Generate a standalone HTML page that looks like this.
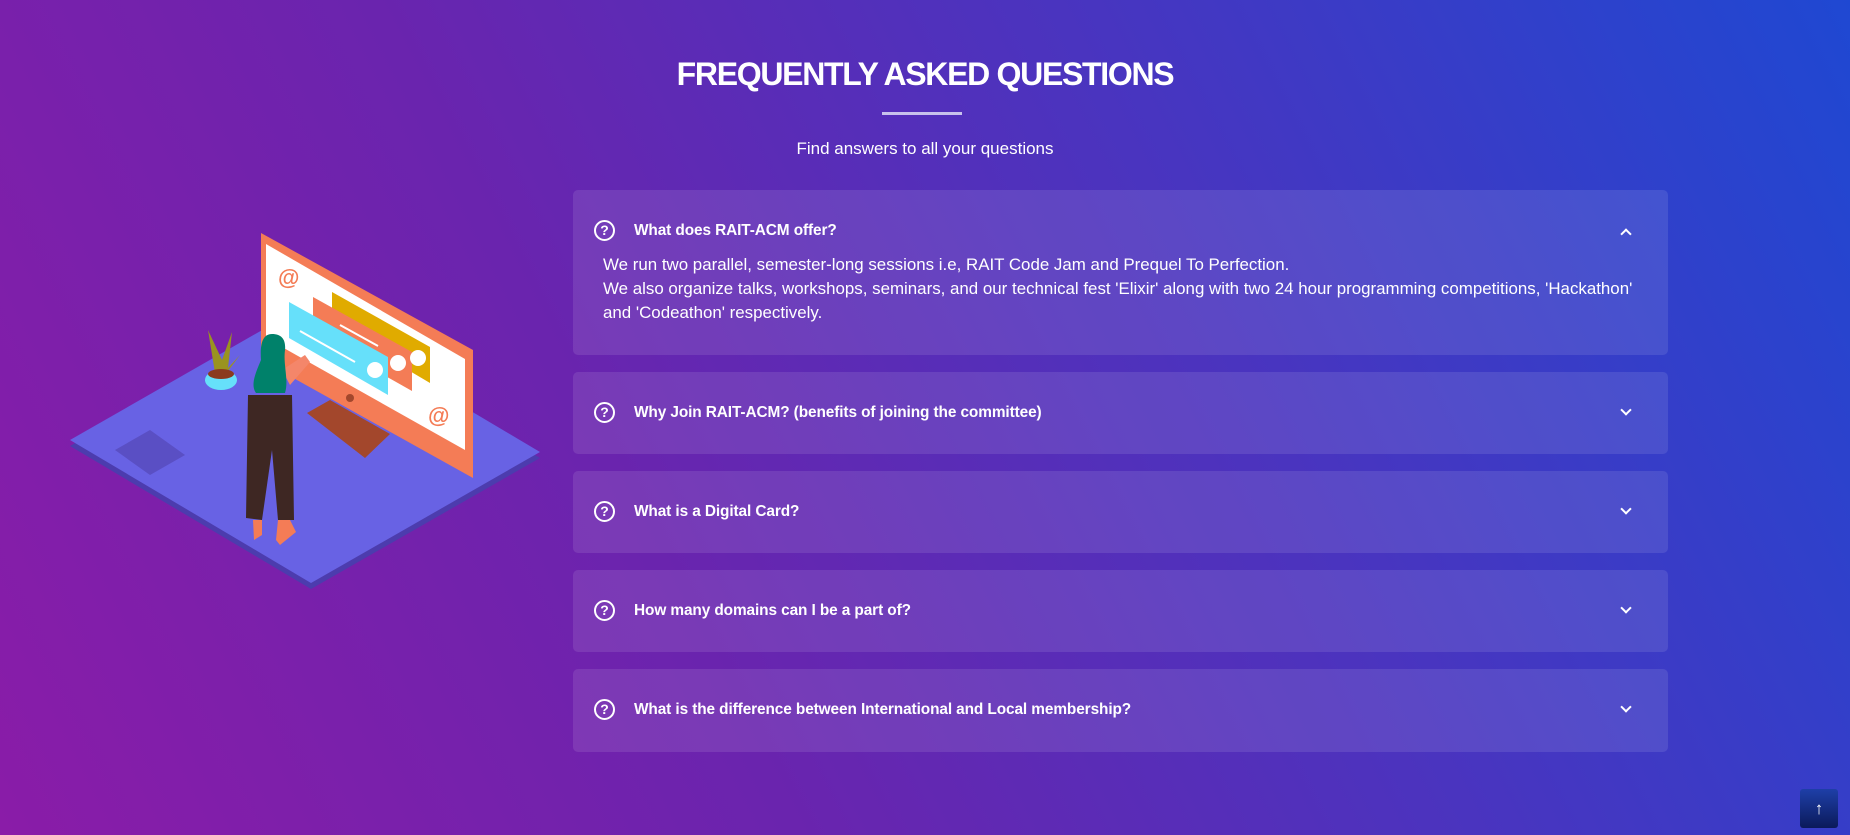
<!DOCTYPE html>
<html><head><meta charset="utf-8"><style>
*{margin:0;padding:0;box-sizing:border-box}
body{width:1850px;height:835px;overflow:hidden;font-family:"Liberation Sans",sans-serif;color:#fff;
background:linear-gradient(63deg,#8a1ca8 0%,#6a24ae 35%,#4a34bf 65%,#1f48d2 100%);position:relative}
h1{position:absolute;top:56px;left:0;width:1850px;text-align:center;font-size:32px;font-weight:800;letter-spacing:-1.3px}
.bar{position:absolute;left:882px;top:112px;width:80px;height:3px;background:#c8c2ec}
.sub{position:absolute;top:139px;width:1850px;text-align:center;font-size:17px}
.card{position:absolute;left:573px;width:1095px;background:rgba(255,255,255,0.1);border-radius:5px}
.q{position:absolute;left:61px;font-size:15.4px;font-weight:bold;letter-spacing:-0.1px}
.ic{position:absolute;left:21px;width:21px;height:21px;border:2px solid #fff;border-radius:50%;font-size:14px;font-weight:bold;text-align:center;line-height:17px}
.chev{position:absolute;left:1049px;width:8px;height:8px;border-right:2px solid #fff;border-bottom:2px solid #fff}
.ans{position:absolute;left:30px;top:63px;font-size:16.9px;line-height:24px}
.top{position:absolute;left:1800px;top:789px;width:38px;height:39px;border-radius:3px;background:linear-gradient(#1e3fa8,#0b1a5a);font-size:17px;text-align:center;line-height:39px;font-weight:bold}
</style></head><body>
<svg width="600" height="620" style="position:absolute;left:0;top:0" viewBox="0 0 600 620">
<polygon points="70,446 299,315 540,458 311,589" fill="#4c3cae"/>
<polygon points="70,440 299,309 540,452 311,583" fill="#6862e4"/>
<polygon points="115,450 150,430 185,455 150,475" fill="#5a4fc4"/>
<polygon points="307,413 330,400 390,434 365,458" fill="#a3472c"/>
<polygon points="261,233 473,350 473,478 261,360" fill="#f47c56"/>
<polygon points="266,244 465,359 465,450 266,338" fill="#fff"/>
<polygon points="332,292 430,347 430,383 332,325" fill="#e0ab00"/>
<polygon points="313,297 412,352 412,391 313,335" fill="#f47c56"/>
<polygon points="289,302 388,357 388,395 289,338" fill="#66e0fa"/>
<circle cx="418" cy="358" r="8" fill="#fff"/><circle cx="398" cy="363" r="8" fill="#fff"/><circle cx="375" cy="370" r="8" fill="#fff"/>
<line x1="300" y1="331" x2="355" y2="362" stroke="#fff" stroke-width="2"/>
<line x1="340" y1="325" x2="378" y2="346" stroke="#fff" stroke-width="2"/>
<text x="278" y="285" font-size="22" fill="#f47c56" font-weight="bold">@</text>
<text x="428" y="423" font-size="22" fill="#f47c56" font-weight="bold">@</text>
<ellipse cx="350" cy="398" rx="4" ry="4" fill="#a3472c"/>
<path d="M215,373 L208,330 L222,360 L232,332 L228,368 L240,355 L225,375Z" fill="#9a9320"/>
<ellipse cx="221" cy="380" rx="16" ry="10" fill="#66e0fa"/><ellipse cx="221" cy="374" rx="13" ry="5" fill="#8b3a1e"/>
<path d="M282,370 L305,355 L310,362 L290,385Z" fill="#f4866a"/>
<path d="M248,395 L292,395 L294,520 L278,520 L272,450 L262,520 L246,518Z" fill="#3e2723"/>
<path d="M254,540 L253,520 L262,520 L262,535Z M276,540 L278,520 L290,520 L296,532 L280,545Z" fill="#f47c56"/>
<path d="M272,334 C262,334 260,345 261,360 C256,372 250,385 256,393 L285,393 C289,380 283,365 285,350 C286,340 282,334 272,334Z" fill="#00816a"/>
</svg>
<h1>FREQUENTLY ASKED QUESTIONS</h1>
<div class="bar"></div>
<div class="sub">Find answers to all your questions</div>
<div class="card" style="top:190px;height:165px">
<div class="ic" style="top:30px">?</div><div class="q" style="top:32px">What does RAIT-ACM offer?</div>
<div class="chev" style="top:40px;transform:rotate(-135deg)"></div>
<div class="ans">We run two parallel, semester-long sessions i.e, RAIT Code Jam and Prequel To Perfection.<br>We also organize talks, workshops, seminars, and our technical fest 'Elixir' along with two 24 hour programming competitions, 'Hackathon'<br>and 'Codeathon' respectively.</div></div>
<div class="card" style="top:372px;height:82px"><div class="ic" style="top:30px">?</div><div class="q" style="top:32px">Why Join RAIT-ACM? (benefits of joining the committee)</div><div class="chev" style="top:34px;transform:rotate(45deg)"></div></div>
<div class="card" style="top:471px;height:82px"><div class="ic" style="top:30px">?</div><div class="q" style="top:32px">What is a Digital Card?</div><div class="chev" style="top:34px;transform:rotate(45deg)"></div></div>
<div class="card" style="top:570px;height:82px"><div class="ic" style="top:30px">?</div><div class="q" style="top:32px">How many domains can I be a part of?</div><div class="chev" style="top:34px;transform:rotate(45deg)"></div></div>
<div class="card" style="top:669px;height:83px"><div class="ic" style="top:30px">?</div><div class="q" style="top:32px">What is the difference between International and Local membership?</div><div class="chev" style="top:34px;transform:rotate(45deg)"></div></div>
<div class="top">↑</div>
</body></html>
